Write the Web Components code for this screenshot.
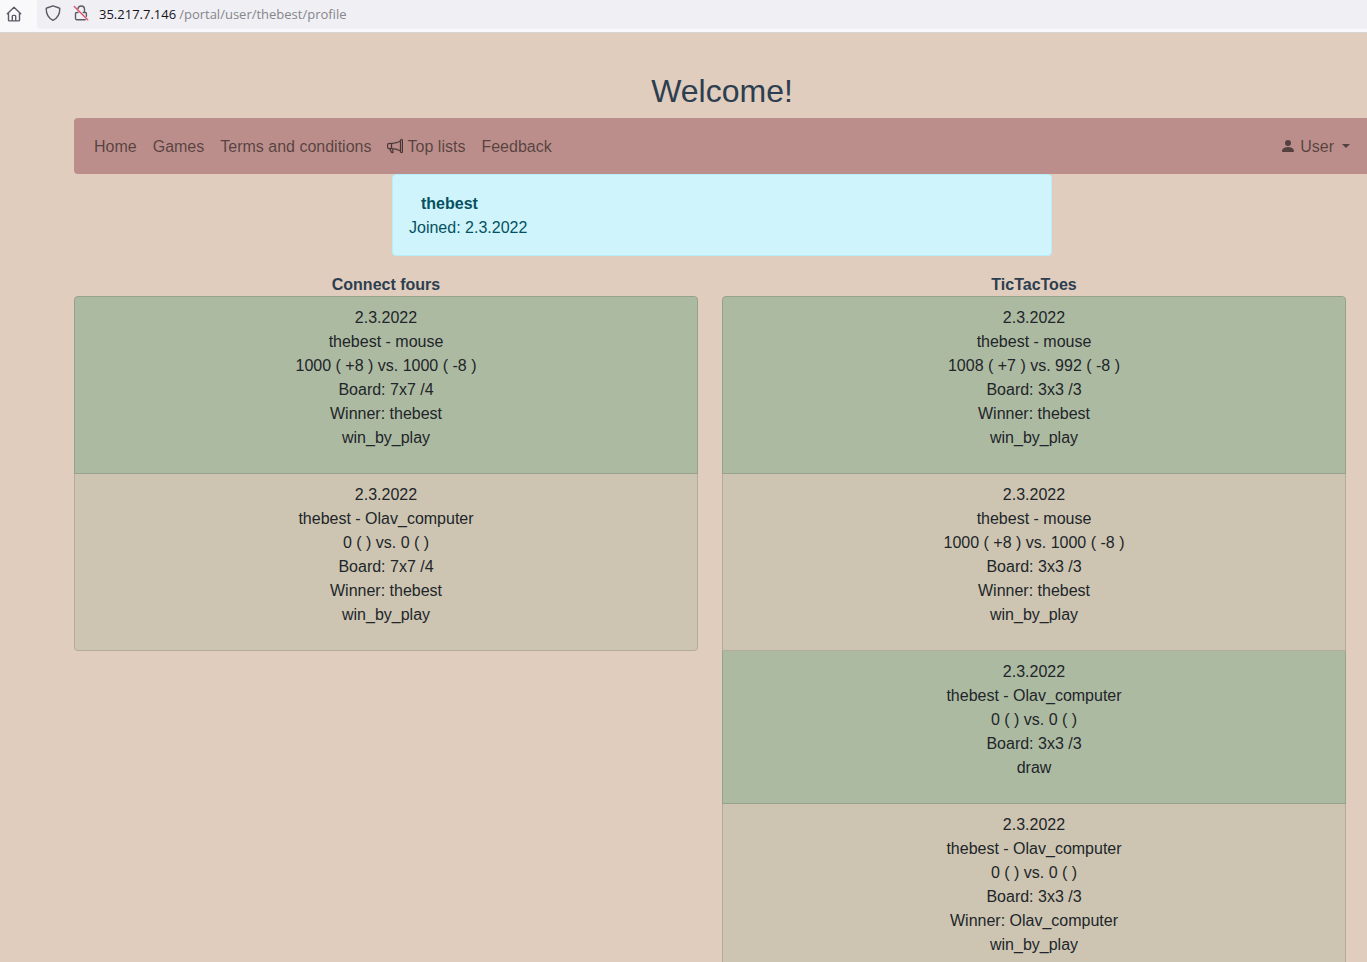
<!DOCTYPE html>
<html lang="en">
<head>
<meta charset="utf-8">
<meta name="viewport" content="width=device-width, initial-scale=1">
<title>Profile</title>
<style>
  html, body { height: 100%; margin: 0; }
  body { overflow: hidden; background: #e0cdbd; color: #212529; font: 16px/24px "Liberation Sans", Arial, sans-serif; }
</style>
</head>
<body>
<profile-app></profile-app>

<template id="address-bar">
  <style>
    :host { display: flex; height: 33px; box-sizing: border-box; background: #f9f9fb; border-bottom: 1px solid #d8d4d4; }
    button { display: flex; align-items: center; justify-content: center; border: 0; padding: 0; background: none; color: #5b5b66; }
    .home { width: 28px; height: 28px; margin-right: 9px; }
    .field { flex: 1; display: flex; align-items: flex-start; height: 29px; padding-left: 8px; background: #f0f0f4; border-radius: 0 0 0 4px; }
    .shield { width: 16px; height: 26px; margin-right: 12px; }
    .lock { width: 16px; height: 26px; margin-right: 10px; }
    .url { flex: 1; display: flex; gap: 3px; align-items: center; font: 13px/28px "Open Sans", sans-serif; color: #85858c; outline: 0; white-space: nowrap; }
    .url span { color: #15141a; }
    svg { display: block; fill: none; stroke: currentColor; stroke-width: 1.4; stroke-linejoin: round; stroke-linecap: round; }
  </style>
  <button class="home" aria-label="Home page"><svg width="16" height="16" viewBox="0 0 16 16"><path d="M1.3 7.7 8 1.2l6.7 6.500M2.500 6.800v7.400c0 .4.3.7.7.7h9.600c.4 0 .7-.3.7-.7V6.800M6.300 14.600v-4.300c0-.5.4-.9.9-.9h1.600c.5 0 .9.4.9.9v4.300"/></svg></button>
  <div class="field">
    <button class="shield" aria-label="Tracking protection"><svg width="16" height="16" viewBox="0 0 16 16"><path d="M8 .8 14.200 3c.4.1.6.4.6.8 0 5.600-2.300 9.500-6.800 11.500C3.500 13.300 1.200 9.400 1.200 3.800c0-.4.2-.7.6-.8z"/></svg></button>
    <button class="lock" aria-label="Connection not secure"><svg width="16" height="16" viewBox="0 0 16 16"><path d="M4.900 3.800C5.300 2.200 6.500 1 8.200 1c1.900 0 3.300 1.500 3.300 3.300V7.500M5 7.500H3.600c-.6 0-1.100.5-1.100 1.100v5c0 .6.5 1.100 1.100 1.100h8.600M10.200 7.500h2.100c.6 0 1.100.5 1.100 1.100v2.600"/><path stroke="#e2506f" d="m1.300 1.500 13.400 13.300"/></svg></button>
    <div class="url" role="textbox" aria-label="Address" contenteditable="true" spellcheck="false"><span>35.217.7.146</span>/portal/user/thebest/profile</div>
  </div>
</template>

<template id="site-nav">
  <style>
    :host { display: block; }
    nav { display: flex; align-items: center; justify-content: space-between; padding: 8px 12px; background: #bb8e8b; border-radius: 4px; }
    ul { display: flex; margin: 0; padding: 0; list-style: none; }
    a, button { display: block; padding: 9px 8px 7px; font: inherit; color: rgba(0, 0, 0, .55); text-decoration: none; white-space: nowrap; background: none; border: 0; }
    svg { width: 16px; height: 16px; fill: currentColor; vertical-align: -2px; }
    .horn { stroke: currentColor; stroke-width: .3; }
    .caret { display: inline-block; margin-left: 8px; vertical-align: 4px; border: 4px solid transparent; border-top-color: currentColor; border-bottom: 0; }
  </style>
  <nav aria-label="Main">
    <ul>
      <li><a href="#home">Home</a></li>
      <li><a href="#games">Games</a></li>
      <li><a href="#terms">Terms and conditions</a></li>
      <li><a href="#top"><svg class="horn" viewBox="0 0 16 16" aria-hidden="true"><path d="M13 2.500a1.500 1.500 0 0 1 3 0v11a1.500 1.500 0 0 1-3 0v-.214c-2.162-1.241-4.490-1.843-6.912-2.083l.405 2.712A1 1 0 0 1 5.510 15.100h-.548a1 1 0 0 1-.916-.599l-1.850-3.490-.202-.003A2.014 2.014 0 0 1 0 9V7a2.020 2.020 0 0 1 1.992-2.013 75 75 0 0 0 2.483-.075c3.043-.154 6.148-.849 8.525-2.199zm1 0v11a.5.5 0 0 0 1 0v-11a.5.5 0 0 0-1 0m-1 1.350c-2.344 1.205-5.209 1.842-8 2.033v4.233q.27.015.537.036c2.568.189 5.093.744 7.463 1.993zm-9 6.215v-4.130a95 95 0 0 1-1.992.052A1.020 1.020 0 0 0 1 7v2c0 .55.448 1.002 1.006 1.009A61 61 0 0 1 4 10.065m-.657.975 1.609 3.037.010.024h.548l-.002-.014-.443-2.966a68 68 0 0 0-1.722-.082z"/></svg> Top lists</a></li>
      <li><a href="#feedback">Feedback</a></li>
    </ul>
    <button aria-haspopup="true"><svg viewBox="0 0 16 16" aria-hidden="true"><path d="M3 14s-1 0-1-1 1-4 6-4 6 3 6 4-1 1-1 1zm5-6a3 3 0 1 0 0-6 3 3 0 0 0 0 6"/></svg> User<span class="caret"></span></button>
  </nav>
</template>

<template id="player-card">
  <style>
    :host { display: block; box-sizing: border-box; width: 660px; max-width: 100%; margin: 0 auto 18px; padding: 17px 16px 15px; color: #055160; background: #cff4fc; border: 1px solid #b6effb; border-radius: 4px; }
    strong { display: block; padding-left: 12px; }
  </style>
  <strong><slot name="name"></slot></strong>
  <div><slot></slot></div>
</template>

<template id="game-list">
  <style>
    :host { display: block; text-align: center; }
    h2 { margin: 0; font-size: 16px; line-height: 22px; color: #2c3e50; }
    .list { border-radius: 4px; overflow: hidden; }
  </style>
  <h2></h2>
  <div class="list"><slot></slot></div>
</template>

<template id="game-result">
  <style>
    :host { display: block; padding: 9px 16px 8px; background: #cdc5b2; border: solid rgba(0, 0, 0, .125); border-width: 0 1px 1px; }
    :host(:nth-child(odd)) { background: #adbaa2; }
    :host(:first-child) { border-top-width: 1px; border-radius: 4px 4px 0 0; }
    :host(:last-child) { border-radius: 0 0 4px 4px; }
    p { margin: 0 0 15px; white-space: pre-line; }
  </style>
  <p></p>
</template>

<template id="profile-app">
  <style>
    :host { display: block; }
    main { margin: 0 -3px 0 74px; padding-top: 39px; }
    h1 { margin: 0 0 8px; font-size: 32px; line-height: 38px; font-weight: 400; text-align: center; color: #2c3e50; }
    .games { display: grid; grid-template-columns: 1fr 1fr; gap: 24px; align-items: start; margin-right: 24px; }
  </style>
  <address-bar></address-bar>
  <main>
    <h1>Welcome!</h1>
    <site-nav></site-nav>
    <player-card><span slot="name">thebest</span>Joined: 2.3.2022</player-card>
    <div class="games">
      <game-list heading="Connect fours">
        <game-result opponent="mouse" score="1000 ( +8 ) vs. 1000 ( -8 )" board="7x7 /4" winner="thebest" result="win_by_play"></game-result>
        <game-result opponent="Olav_computer" score="0 ( ) vs. 0 ( )" board="7x7 /4" winner="thebest" result="win_by_play"></game-result>
      </game-list>
      <game-list heading="TicTacToes">
        <game-result opponent="mouse" score="1008 ( +7 ) vs. 992 ( -8 )" board="3x3 /3" winner="thebest" result="win_by_play"></game-result>
        <game-result opponent="mouse" score="1000 ( +8 ) vs. 1000 ( -8 )" board="3x3 /3" winner="thebest" result="win_by_play"></game-result>
        <game-result opponent="Olav_computer" score="0 ( ) vs. 0 ( )" board="3x3 /3" result="draw"></game-result>
        <game-result opponent="Olav_computer" score="0 ( ) vs. 0 ( )" board="3x3 /3" winner="Olav_computer" result="win_by_play"></game-result>
      </game-list>
    </div>
  </main>
</template>

<script>
  class TemplateElement extends HTMLElement {
    constructor() {
      super();
      this.attachShadow({ mode: "open" })
        .append(document.getElementById(this.localName).content.cloneNode(true));
    }
  }
  class AddressBar extends TemplateElement {}
  class SiteNav extends TemplateElement {}
  class PlayerCard extends TemplateElement {}
  class GameList extends TemplateElement {
    connectedCallback() {
      this.shadowRoot.querySelector("h2").textContent = this.getAttribute("heading");
    }
  }
  class GameResult extends TemplateElement {
    connectedCallback() {
      const get = name => this.getAttribute(name);
      const lines = ["2.3.2022", "thebest - " + get("opponent"), get("score"), "Board: " + get("board")];
      if (get("winner")) lines.push("Winner: " + get("winner"));
      lines.push(get("result"));
      this.shadowRoot.querySelector("p").textContent = lines.join("\n");
    }
  }
  class ProfileApp extends TemplateElement {}
  customElements.define("address-bar", AddressBar);
  customElements.define("site-nav", SiteNav);
  customElements.define("player-card", PlayerCard);
  customElements.define("game-list", GameList);
  customElements.define("game-result", GameResult);
  customElements.define("profile-app", ProfileApp);
</script>
</body>
</html>
